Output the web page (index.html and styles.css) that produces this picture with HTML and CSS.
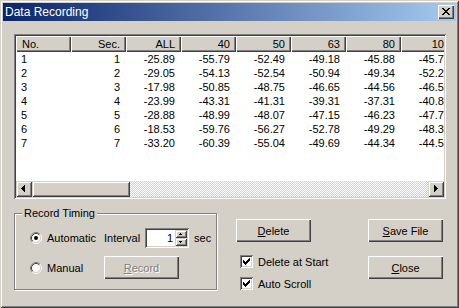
FILE: index.html
```html
<!DOCTYPE html>
<html>
	<head>
		<meta charset="utf-8">
		<title>Data Recording</title>
		<link rel="stylesheet" href="styles.css">
	</head>
	<body>
		<div class="window">
			<div class="titlebar">
				<span class="title">Data Recording</span>
				<span class="close-btn">
					<svg width="16" height="14" viewBox="0 0 16 14"><path d="M4 3h2v1h1v1h2v-1h1v-1h2v1h-1v1h-1v1h-1v1h1v1h1v1h1v1h-2v-1h-1v-1h-2v1h-1v1h-2v-1h1v-1h1v-1h1v-1h-1v-1h-1v-1h-1z" fill="#000"/></svg>
				</span>
			</div>
			<div class="client">
				<div class="listview">
					<div class="list-area">
						<table class="grid">
							<thead>
								<tr><th class="left">No.</th><th>Sec.</th><th>ALL</th><th>40</th><th>50</th><th>63</th><th>80</th><th>100</th></tr>
							</thead>
							<tbody>
								<tr><td class="left">1</td><td>1</td><td>-25.89</td><td>-55.79</td><td>-52.49</td><td>-49.18</td><td>-45.88</td><td>-45.74</td></tr>
								<tr><td class="left">2</td><td>2</td><td>-29.05</td><td>-54.13</td><td>-52.54</td><td>-50.94</td><td>-49.34</td><td>-52.21</td></tr>
								<tr><td class="left">3</td><td>3</td><td>-17.98</td><td>-50.85</td><td>-48.75</td><td>-46.65</td><td>-44.56</td><td>-46.53</td></tr>
								<tr><td class="left">4</td><td>4</td><td>-23.99</td><td>-43.31</td><td>-41.31</td><td>-39.31</td><td>-37.31</td><td>-40.85</td></tr>
								<tr><td class="left">5</td><td>5</td><td>-28.88</td><td>-48.99</td><td>-48.07</td><td>-47.15</td><td>-46.23</td><td>-47.72</td></tr>
								<tr><td class="left">6</td><td>6</td><td>-18.53</td><td>-59.76</td><td>-56.27</td><td>-52.78</td><td>-49.29</td><td>-48.36</td></tr>
								<tr><td class="left">7</td><td>7</td><td>-33.20</td><td>-60.39</td><td>-55.04</td><td>-49.69</td><td>-44.34</td><td>-44.58</td></tr>
							</tbody>
						</table>
					</div>
					<div class="hscroll">
						<span class="sb-btn"><svg width="16" height="16" viewBox="0 0 16 16"><path d="M5 7h1v1H5z M6 6h1v3H6z M7 5h1v5H7z M8 4h1v7H8z" fill="#000"/></svg></span>
						<span class="sb-thumb"></span>
						<span class="sb-track"></span>
						<span class="sb-btn"><svg width="16" height="16" viewBox="0 0 16 16"><path d="M6 4h1v7H6z M7 5h1v5H7z M8 6h1v3H8z M9 7h1v1H9z" fill="#000"/></svg></span>
					</div>
				</div>
				<div class="lower">
					<fieldset class="group">
						<legend>Record Timing</legend>
						<div class="opt-row">
							<span class="opt">
								<svg class="radio" width="12" height="12" viewBox="0 0 12 12">
									<circle cx="6" cy="6" r="4.5" fill="#fff"/>
									<path d="M2.11 9.89A5.5 5.5 0 0 1 9.89 2.11" stroke="#808080" fill="none"/>
									<path d="M9.89 2.11A5.5 5.5 0 0 1 2.11 9.89" stroke="#fff" fill="none"/>
									<path d="M2.82 9.18A4.5 4.5 0 0 1 9.18 2.82" stroke="#404040" fill="none"/>
									<path d="M9.18 2.82A4.5 4.5 0 0 1 2.82 9.18" stroke="#d4d0c8" fill="none"/>
									<circle cx="6" cy="6" r="2" fill="#000"/>
								</svg>
								<span>Automatic</span>
							</span>
							<span class="interval">
								<span>Interval</span>
								<span class="spin-edit">
									<span class="spin-value">1</span>
									<span class="spin">
										<span class="spin-btn"><svg width="11" height="8" viewBox="0 0 11 8"><path d="M5 3h1v1H5z M4 4h3v1H4z" fill="#000"/></svg></span>
										<span class="spin-btn"><svg width="11" height="8" viewBox="0 0 11 8"><path d="M4 3h3v1H4z M5 4h1v1H5z" fill="#000"/></svg></span>
									</span>
								</span>
								<span>sec</span>
							</span>
						</div>
						<div class="opt-row">
							<span class="opt">
								<svg class="radio" width="12" height="12" viewBox="0 0 12 12">
									<circle cx="6" cy="6" r="4.5" fill="#fff"/>
									<path d="M2.11 9.89A5.5 5.5 0 0 1 9.89 2.11" stroke="#808080" fill="none"/>
									<path d="M9.89 2.11A5.5 5.5 0 0 1 2.11 9.89" stroke="#fff" fill="none"/>
									<path d="M2.82 9.18A4.5 4.5 0 0 1 9.18 2.82" stroke="#404040" fill="none"/>
									<path d="M9.18 2.82A4.5 4.5 0 0 1 2.82 9.18" stroke="#d4d0c8" fill="none"/>
								</svg>
								<span>Manual</span>
							</span>
							<button type="button" class="btn disabled"><u>R</u>ecord</button>
						</div>
					</fieldset>
					<div class="actions">
						<div class="col col-left">
							<button type="button" class="btn"><u>D</u>elete</button>
							<div class="checks">
								<label class="check"><span class="box"><svg width="7" height="7" viewBox="0 0 7 7"><path d="M0 2h1v3H0z M1 3h1v3H1z M2 4h1v3H2z M3 3h1v3H3z M4 2h1v3H4z M5 1h1v3H5z M6 0h1v3H6z" fill="#000"/></svg></span>Delete at Start</label>
								<label class="check"><span class="box"><svg width="7" height="7" viewBox="0 0 7 7"><path d="M0 2h1v3H0z M1 3h1v3H1z M2 4h1v3H2z M3 3h1v3H3z M4 2h1v3H4z M5 1h1v3H5z M6 0h1v3H6z" fill="#000"/></svg></span>Auto Scroll</label>
							</div>
						</div>
						<div class="col col-right">
							<button type="button" class="btn"><u>S</u>ave File</button>
							<button type="button" class="btn"><u>C</u>lose</button>
						</div>
					</div>
				</div>
			</div>
		</div>
	</body>
</html>
```

FILE: styles.css
```css
*{
	margin: 0;
	padding: 0;
	box-sizing: border-box;
}
body{
	background: #d4d0c8;
	font: 11px "Liberation Sans", Arial, sans-serif;
	color: #000;
}
.window{
	width: 459px;
	height: 308px;
	padding: 3px;
	background: #d4d0c8;
	box-shadow: inset 1px 1px #d4d0c8, inset -1px -1px #404040, inset 2px 2px #fff, inset -2px -2px #808080;
}
.titlebar{
	height: 18px;
	display: flex;
	align-items: center;
	padding: 0 2px;
	background: linear-gradient(to right, #0a246a, #a6caf0);
	color: #fff;
	font-size: 12px;
}
.close-btn{
	margin-left: auto;
	width: 16px;
	height: 14px;
	background: #d4d0c8;
	box-shadow: inset 1px 1px #fff, inset -1px -1px #404040, inset -2px -2px #808080;
}
.close-btn svg{
	display: block;
}
.client{
	padding: 13px 0 0 11px;
}
/* list */
.listview{
	width: 432px;
	height: 165px;
	padding: 2px;
	background: #fff;
	display: flex;
	flex-direction: column;
	box-shadow: inset 1px 1px #808080, inset -1px -1px #fff, inset 2px 2px #404040, inset -2px -2px #d4d0c8;
}
.list-area{
	flex: 1;
	overflow: hidden;
}
.grid{
	table-layout: fixed;
	width: 440px;
	border-collapse: separate;
	border-spacing: 0;
}
.grid th{
	width: 55px;
	height: 16px;
	padding: 0 6px;
	font-weight: normal;
	text-align: right;
	background: #d4d0c8;
	white-space: nowrap;
	box-shadow: inset 1px 1px #fff, inset -1px -1px #404040, inset -2px -2px #808080;
}
.grid td{
	height: 14px;
	line-height: 14px;
	padding: 0 6px;
	text-align: right;
	white-space: nowrap;
}
.grid .left{
	text-align: left;
}
.grid td.left{
	padding-left: 5px;
}
.hscroll{
	height: 16px;
	display: flex;
}
.sb-btn, .sb-thumb{
	width: 16px;
	height: 16px;
	background: #d4d0c8;
	box-shadow: inset 1px 1px #d4d0c8, inset -1px -1px #404040, inset 2px 2px #fff, inset -2px -2px #808080;
}
.sb-btn svg{
	display: block;
}
.sb-thumb{
	width: 98px;
}
.sb-track{
	flex: 1;
	background: repeating-conic-gradient(#fff 0 25%, #d4d0c8 0 50%) 0 0/2px 2px;
}
/* lower part */
.lower{
	display: flex;
	margin-top: 8px;
}
.group{
	flex: none;
	width: 203px;
	height: 83px;
	border: 1px solid #808080;
	box-shadow: inset 1px 1px #fff, 1px 1px #fff;
	padding: 8px 0 0 0;
	min-width: 0;
}
.group legend{
	margin-left: 7px;
	padding: 0 2px;
	line-height: 13px;
	background: #d4d0c8;
}
.opt-row{
	display: flex;
	align-items: center;
	height: 20px;
	margin-left: 15px;
}
.opt-row + .opt-row{
	height: 23px;
	margin-top: 8px;
}
.opt{
	width: 74px;
	display: flex;
	align-items: center;
	gap: 5px;
}
.radio{
	display: block;
}
.interval{
	display: flex;
	align-items: center;
	gap: 5px;
}
.spin-edit{
	width: 44px;
	height: 20px;
	padding: 2px;
	display: flex;
	background: #fff;
	box-shadow: inset 1px 1px #808080, inset -1px -1px #fff, inset 2px 2px #404040, inset -2px -2px #d4d0c8;
}
.spin-value{
	flex: 1;
	text-align: right;
	line-height: 16px;
	padding-right: 2px;
}
.spin{
	width: 12px;
	display: flex;
	flex-direction: column;
}
.spin-btn{
	height: 8px;
	background: #d4d0c8;
	box-shadow: inset 1px 1px #d4d0c8, inset -1px -1px #404040, inset 2px 2px #fff, inset -2px -2px #808080;
}
.spin-btn svg{
	display: block;
}
.btn{
	width: 75px;
	height: 23px;
	border: none;
	background: #d4d0c8;
	font: inherit;
	color: #000;
	box-shadow: inset 1px 1px #fff, inset -1px -1px #404040, inset -2px -2px #808080;
}
.btn.disabled{
	color: #808080;
	text-shadow: 1px 1px #fff;
}
.actions{
	flex: none;
	display: flex;
	margin: 12px 0 0 19px;
}
.col{
	display: flex;
	flex-direction: column;
}
.col-left{
	width: 132px;
}
.col-right{
	width: 75px;
	gap: 14px;
}
.checks{
	display: flex;
	flex-direction: column;
	gap: 9px;
	margin-top: 13px;
	padding-left: 4px;
}
.check{
	display: flex;
	align-items: center;
	gap: 5px;
	height: 13px;
	white-space: nowrap;
}
.check .box{
	width: 13px;
	height: 13px;
	padding: 3px;
	background: #fff;
	box-shadow: inset 1px 1px #808080, inset -1px -1px #fff, inset 2px 2px #404040, inset -2px -2px #d4d0c8;
}
.check .box svg{
	display: block;
}
```
